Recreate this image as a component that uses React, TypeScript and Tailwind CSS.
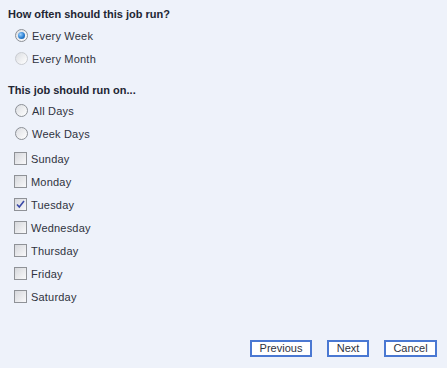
import React from 'react'

const Radio = ({ checked, faded }: { checked?: boolean; faded?: boolean }) => (
  <span
    className={`relative flex items-center justify-center w-[13px] h-[13px] rounded-full border ${
      faded ? 'border-[#c9ccd1]' : 'border-[#8c9096]'
    } bg-gradient-to-br from-[#dcdee2] to-[#ffffff] shrink-0`}
  >
    {checked && (
      <span className="w-[7px] h-[7px] rounded-full bg-[radial-gradient(circle_at_35%_35%,#9fd3ff_0%,#2b7fd2_55%,#0b4f98_100%)]" />
    )}
  </span>
)

const Check = ({ checked }: { checked?: boolean }) => (
  <span className="relative flex items-center justify-center w-[13px] h-[13px] border border-[#8f9297] bg-gradient-to-br from-[#d6d8dc] to-[#f9f9fa] shrink-0">
    {checked && (
      <svg width="9" height="9" viewBox="0 0 9 9">
        <path d="M1 4.5 L3.3 7 L8 1" fill="none" stroke="#3b4aa8" strokeWidth="1.6" />
      </svg>
    )}
  </span>
)

const Row = ({ children, label, x = 'pl-[7px]' }: { children: React.ReactNode; label: string; x?: string }) => (
  <div className={`flex items-center h-[23px] ${x} gap-[4px]`}>
    {children}
    <span className="tracking-[0.2px]">{label}</span>
  </div>
)

const days = ['Sunday', 'Monday', 'Tuesday', 'Wednesday', 'Thursday', 'Friday', 'Saturday']

export default function App() {
  return (
    <div
      className="w-[447px] h-[368px] bg-[#eef2fa] text-[#2f3340] text-[11px] leading-[14px] pt-[7px] pl-[8px]"
      style={{ fontFamily: '"Liberation Sans", Arial, sans-serif' }}
    >
      <div className="font-bold h-[14px] text-[#222633]">How often should this job run?</div>
      <div className="mt-[3px]">
        <Row label="Every Week">
          <Radio checked />
        </Row>
        <Row label="Every Month">
          <Radio faded />
        </Row>
      </div>

      <div className="font-bold h-[14px] mt-[13px] text-[#222633]">This job should run on...</div>
      <div className="mt-[2px]">
        <Row label="All Days">
          <Radio />
        </Row>
        <Row label="Week Days">
          <Radio />
        </Row>
      </div>

      <div className="mt-[2px]">
        {days.map((d) => (
          <Row key={d} label={d} x="pl-[6px]">
            <Check checked={d === 'Tuesday'} />
          </Row>
        ))}
      </div>

      <div className="flex justify-end gap-[15px] pr-[10px] mt-[32px]">
        <button className="w-[62px] h-[17px] border-2 border-[#4a78d2] bg-white text-[11px] leading-[13px] text-[#2f3340]">
          Previous
        </button>
        <button className="w-[42px] h-[17px] border-2 border-[#4a78d2] bg-white text-[11px] leading-[13px] text-[#2f3340]">
          Next
        </button>
        <button className="w-[53px] h-[17px] border-2 border-[#4a78d2] bg-white text-[11px] leading-[13px] text-[#2f3340]">
          Cancel
        </button>
      </div>
    </div>
  )
}
